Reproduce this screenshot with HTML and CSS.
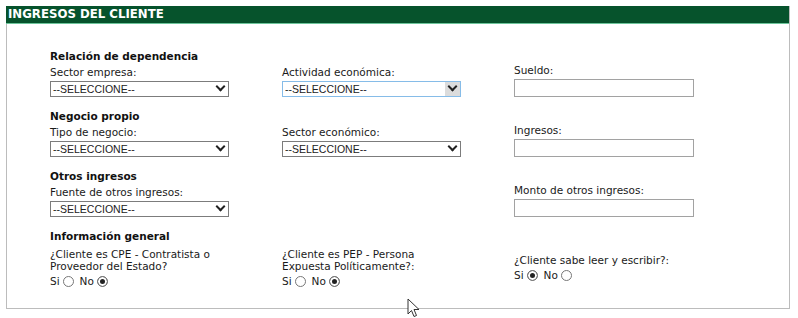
FILE: index.html
```html
<!DOCTYPE html>
<html lang="es">
<head>
    <meta charset="UTF-8">
    <meta name="viewport" content="width=device-width, initial-scale=1.0">
    <title>Ingresos del cliente</title>
    <link rel="stylesheet" href="styles.css">
</head>
<body>
    <div class="panel">
        <div class="panel-head">INGRESOS DEL CLIENTE</div>
        <div class="panel-body">

            <div class="group">
                <h3>Relación de dependencia</h3>
                <div class="row">
                    <div class="field">
                        <label>Sector empresa:</label>
                        <div class="sel"><select><option>--SELECCIONE--</option></select></div>
                    </div>
                    <div class="field">
                        <label>Actividad económica:</label>
                        <div class="sel hover"><select><option>--SELECCIONE--</option></select></div>
                    </div>
                    <div class="field">
                        <label>Sueldo:</label>
                        <input type="text">
                    </div>
                </div>
            </div>

            <div class="group">
                <h3>Negocio propio</h3>
                <div class="row">
                    <div class="field">
                        <label>Tipo de negocio:</label>
                        <div class="sel"><select><option>--SELECCIONE--</option></select></div>
                    </div>
                    <div class="field">
                        <label>Sector económico:</label>
                        <div class="sel"><select><option>--SELECCIONE--</option></select></div>
                    </div>
                    <div class="field">
                        <label>Ingresos:</label>
                        <input type="text">
                    </div>
                </div>
            </div>

            <div class="group">
                <h3>Otros ingresos</h3>
                <div class="row">
                    <div class="field">
                        <label>Fuente de otros ingresos:</label>
                        <div class="sel"><select><option>--SELECCIONE--</option></select></div>
                    </div>
                    <div class="field"></div>
                    <div class="field">
                        <label>Monto de otros ingresos:</label>
                        <input type="text">
                    </div>
                </div>
            </div>

            <div class="group">
                <h3>Información general</h3>
                <div class="row center">
                    <div class="field">
                        <label class="wrap">¿Cliente es CPE - Contratista o Proveedor del Estado?</label>
                        <div class="radios">
                            Si<input type="radio" name="cpe"> No<input type="radio" name="cpe" checked>
                        </div>
                    </div>
                    <div class="field">
                        <label class="wrap">¿Cliente es PEP - Persona Expuesta Políticamente?:</label>
                        <div class="radios">
                            Si<input type="radio" name="pep"> No<input type="radio" name="pep" checked>
                        </div>
                    </div>
                    <div class="field">
                        <label>¿Cliente sabe leer y escribir?:</label>
                        <div class="radios">
                            Si<input type="radio" name="lee" checked> No<input type="radio" name="lee">
                        </div>
                    </div>
                </div>
            </div>

        </div>
    </div>

    <!-- puntero del ratón -->
    <svg class="cursor" width="13" height="20" viewBox="0 0 13 20">
        <path d="M1 1 L1 16 L4.5 12.5 L7 18.5 L9.5 17.5 L7 11.5 L12 11.5 Z" fill="#fff" stroke="#333" stroke-width="1" stroke-linejoin="round"/>
    </svg>
</body>
</html>
```

FILE: styles.css
```css
body {
    margin: 0;
    background: #fff;
    font-family: "DejaVu Sans", Verdana, sans-serif;
    font-size: 10.5px;
    color: #1a1a1a;
}
.panel {
    margin: 6px 8px 0 6px;
    border: 1px solid #bcbcbc;
    border-top: none;
}
.panel-head {
    margin-left: -1px;
    height: 17px;
    line-height: 17px;
    padding-left: 2px;
    background: #06532c;
    border-bottom: 1px solid #6cc59b;
    color: #fff;
    font-weight: bold;
    font-size: 11.75px;
}
.panel-body {
    padding: 25px 0 21px 43px;
}
.group + .group {
    margin-top: 12px;
}
h3 {
    margin: 0;
    font-size: 10.5px;
    line-height: 15px;
    color: #111;
}
.row {
    display: grid;
    grid-template-columns: 232px 232px 232px;
    align-items: end;
}
.row.center {
    align-items: center;
    margin-top: 4px;
}
.field label {
    display: block;
    line-height: 12px;
    margin-bottom: 3px;
}
.field label.wrap {
    width: 180px;
}
.sel {
    position: relative;
    width: 179px;
}
.sel select {
    appearance: none;
    -webkit-appearance: none;
    display: block;
    width: 100%;
    height: 16px;
    box-sizing: border-box;
    border: 1px solid #7c7c7c;
    border-radius: 0;
    background: #fff;
    padding: 0 0 0 2px;
    font-family: "Liberation Sans", Arial, sans-serif;
    font-size: 10.5px;
    color: #222;
}
.sel::after {
    content: "";
    position: absolute;
    right: 5px;
    top: 2px;
    width: 7px;
    height: 7px;
    box-sizing: border-box;
    border-right: 2px solid #222;
    border-bottom: 2px solid #222;
    transform: rotate(45deg);
    pointer-events: none;
}
.sel.hover select {
    border-color: #86bce8;
}
.sel.hover::before {
    content: "";
    position: absolute;
    right: 1px;
    top: 1px;
    width: 15px;
    height: 14px;
    background: #dcdcdc;
    pointer-events: none;
}
input[type="text"] {
    display: block;
    width: 180px;
    height: 18px;
    box-sizing: border-box;
    margin: 0;
    border: 1px solid #a2a2a2;
    border-radius: 0;
}
.radios {
    line-height: 12px;
    height: 12px;
    display: flex;
    align-items: center;
}
.radios input {
    appearance: none;
    -webkit-appearance: none;
    width: 11px;
    height: 11px;
    margin: 0 6px 0 3px;
    border: 1px solid #777;
    border-radius: 50%;
    background: #fff;
}
.radios input:checked {
    background: #222;
    box-shadow: inset 0 0 0 2px #fff;
}
.cursor {
    position: absolute;
    left: 407px;
    top: 298px;
}
```
